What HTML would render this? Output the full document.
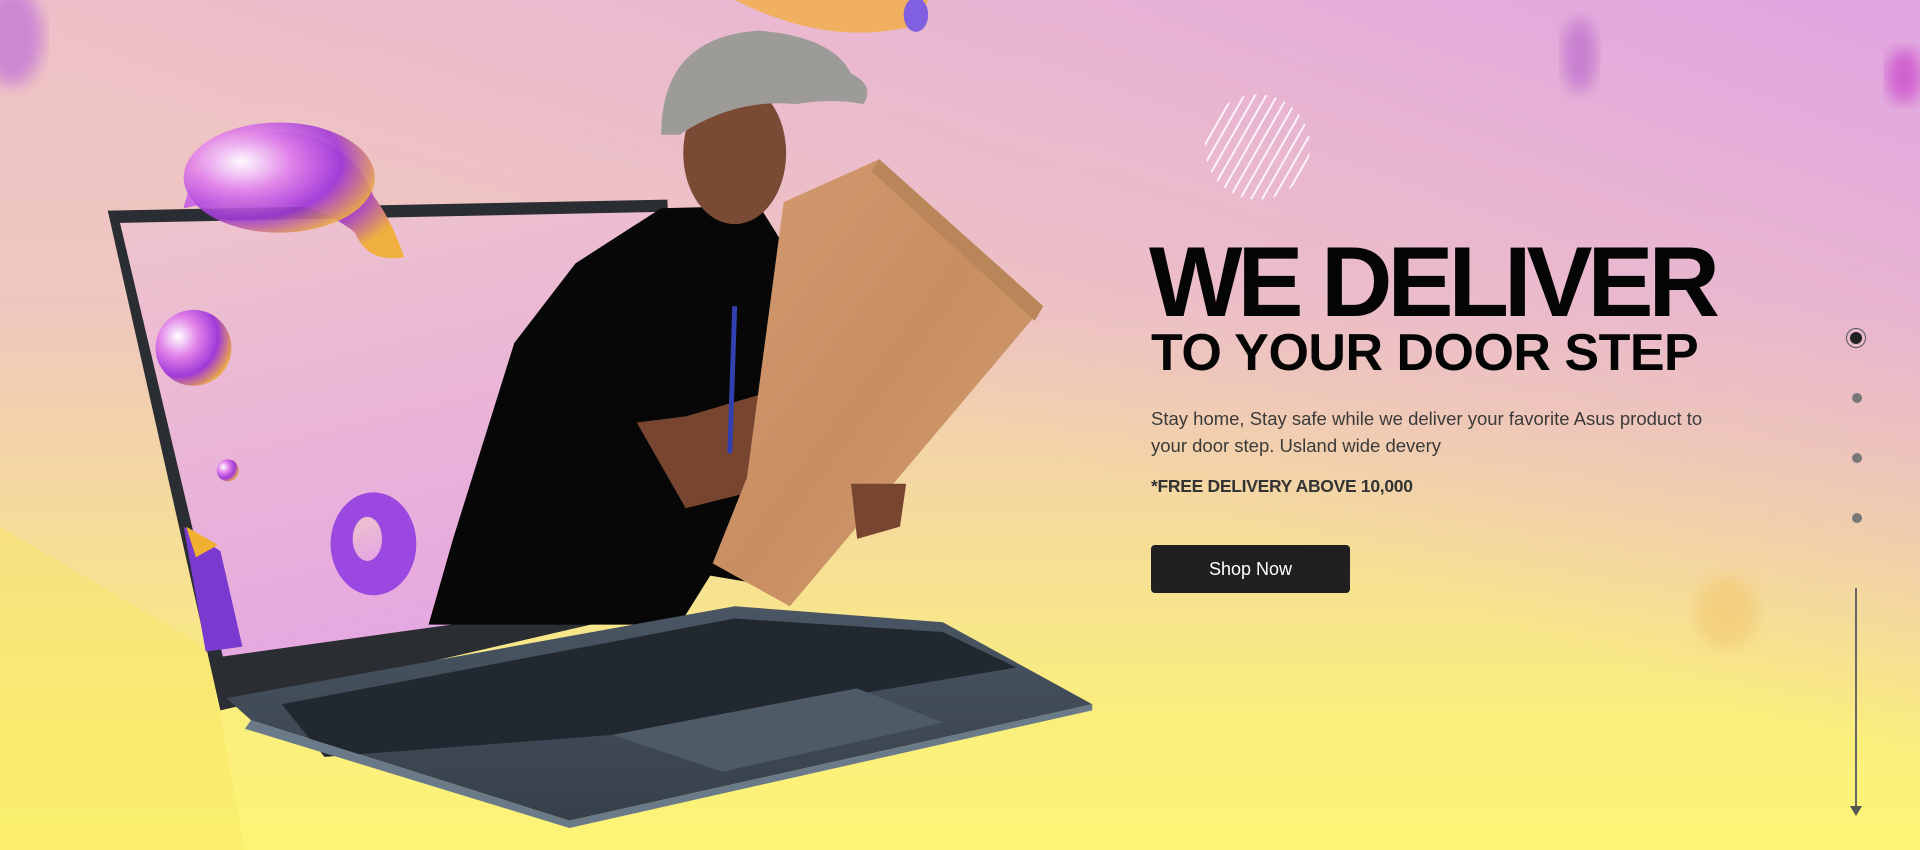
<!DOCTYPE html>
<html><head><meta charset="utf-8"><style>
html,body{margin:0;padding:0}
body{width:1920px;height:850px;position:relative;overflow:hidden;font-family:"Liberation Sans",sans-serif;
background:linear-gradient(180deg,#eec3c6 0%,#efc6c0 35%,#f5dc9a 62%,#fbef7c 85%,#fdf476 100%);}
.ov{position:absolute;inset:0;background:linear-gradient(200deg,rgba(222,160,228,0.9) 0%,rgba(228,170,220,0.5) 25%,rgba(230,180,210,0) 50%);}
svg.art{position:absolute;left:0;top:0;width:1920px;height:850px}
.h1{position:absolute;left:1149px;top:227px;font-size:99px;font-weight:bold;color:#050505;letter-spacing:-5px;line-height:110px;white-space:nowrap}
.h2{position:absolute;left:1151px;top:323px;font-size:52px;font-weight:bold;color:#050505;letter-spacing:-0.5px;line-height:60px;white-space:nowrap}
.p{position:absolute;left:1151px;top:405px;width:585px;font-size:18.5px;line-height:27px;color:#3a3a3a}
.fd{position:absolute;left:1151px;top:476px;font-size:17.5px;font-weight:bold;color:#333;letter-spacing:-0.3px}
.btn{position:absolute;left:1151px;top:545px;width:199px;height:48px;background:#202020;border-radius:4px;color:#fff;font-size:18px;text-align:center;line-height:48px}
.dot{position:absolute;width:10px;height:10px;border-radius:50%;background:#777;left:1852px}
.act{position:absolute;left:1846px;top:328px;width:20px;height:20px;border-radius:50%;border:1px solid #555;box-sizing:border-box}
.act:after{content:"";position:absolute;left:3px;top:3px;width:12px;height:12px;border-radius:50%;background:#222}
.line{position:absolute;left:1855px;top:588px;width:2px;height:218px;background:#666}
.arr{position:absolute;left:1850px;top:806px;border-left:6px solid transparent;border-right:6px solid transparent;border-top:10px solid #555}
</style></head><body>
<div class="ov"></div>
<svg class="art" viewBox="0 0 1568 694" preserveAspectRatio="none">
<defs>
<radialGradient id="sp" cx="0.3" cy="0.35" r="0.75"><stop offset="0" stop-color="#fff"/><stop offset="0.35" stop-color="#e080e8"/><stop offset="0.7" stop-color="#a03ad8"/><stop offset="1" stop-color="#f0b040"/></radialGradient>
<linearGradient id="scr" x1="0" y1="0" x2="0.3" y2="1"><stop offset="0" stop-color="#eec4cc"/><stop offset="1" stop-color="#e6a8e0"/></linearGradient>
<linearGradient id="box" x1="0" y1="0" x2="1" y2="1"><stop offset="0" stop-color="#d49a70"/><stop offset="0.5" stop-color="#c98e62"/><stop offset="1" stop-color="#d0a070"/></linearGradient>
<linearGradient id="deck" x1="0" y1="0" x2="0" y2="1"><stop offset="0" stop-color="#4a5663"/><stop offset="1" stop-color="#36404b"/></linearGradient>
<clipPath id="hc"><circle cx="1027" cy="120" r="43"/></clipPath>
<filter id="bl"><feGaussianBlur stdDeviation="6"/></filter>
</defs>
<polygon points="0,430 170,530 200,694 0,694" fill="#f7e660" opacity="0.4"/>
<ellipse cx="1290" cy="45" rx="14" ry="30" fill="#c880d0" filter="url(#bl)"/>
<ellipse cx="1555" cy="62" rx="14" ry="22" fill="#d060d0" filter="url(#bl)"/>
<ellipse cx="10" cy="30" rx="25" ry="40" fill="#c070d8" filter="url(#bl)" opacity="0.7"/>
<ellipse cx="1410" cy="500" rx="25" ry="30" fill="#f2c870" filter="url(#bl)" opacity="0.6"/>
<g clip-path="url(#hc)" stroke="#fff" stroke-width="1.6" opacity="0.85">
<path d="M934,190 L1014,50 M943,190 L1023,50 M952,190 L1032,50 M961,190 L1041,50 M970,190 L1050,50 M979,190 L1059,50 M988,190 L1068,50 M997,190 L1077,50 M1006,190 L1086,50 M1015,190 L1095,50 M1024,190 L1104,50 M1033,190 L1113,50"/>
</g>
<path d="M600,0 Q680,40 750,20 L758,0 Z" fill="#f0b060"/>
<ellipse cx="748" cy="12" rx="10" ry="14" fill="#8060e0"/>
<polygon points="88,172 545,163 560,492 180,580" fill="#2a2d31"/>
<polygon points="98,182 540,173 555,484 182,536" fill="url(#scr)"/>
<polygon points="150,430 180,450 198,528 168,532" fill="#7a3ad0"/>
<polygon points="152,430 178,445 160,455" fill="#f0b030"/>
<circle cx="158" cy="284" r="31" fill="url(#sp)"/>
<circle cx="186" cy="384" r="9" fill="url(#sp)"/>
<ellipse cx="305" cy="444" rx="35" ry="42" fill="#9a48e0"/>
<ellipse cx="300" cy="440" rx="12" ry="18" fill="url(#scr)"/>
<path d="M150,170 A80,75 0 0 1 305,160 Q320,180 330,210 Q300,215 290,190 Q240,150 150,170Z" fill="url(#sp)"/>
<ellipse cx="228" cy="145" rx="78" ry="45" fill="url(#sp)" opacity="0.9"/>
<polygon points="350,510 370,440 420,280 470,215 540,170 620,168 640,200 640,480 580,470 555,510" fill="#070707"/>
<ellipse cx="600" cy="125" rx="42" ry="58" fill="#7a4a35"/>
<path d="M540,110 Q540,30 620,25 Q680,30 695,60 Q715,70 705,85 Q680,80 650,85 Q600,80 555,110Z" fill="#9c9b97"/>
<polygon points="520,345 560,340 730,290 760,260 820,235 830,260 780,310 740,330 700,345 620,400 560,415" fill="#774530"/>
<polygon points="640,165 718,130 852,250 645,495 582,460 610,390" fill="url(#box)"/>
<polygon points="718,130 852,250 845,262 712,140" fill="#b9865a"/>
<polygon points="695,395 740,395 735,430 700,440" fill="#774530"/>
<path d="M600,250 L596,370" stroke="#3040b0" stroke-width="4"/>
<polygon points="185,570 600,495 770,508 892,575 465,670 205,588" fill="url(#deck)"/>
<polygon points="230,575 600,505 770,516 830,545 500,600 265,618" fill="#22282f"/>
<polygon points="500,600 700,562 770,590 590,630" fill="#4e5a66"/>
<polygon points="205,588 465,670 892,575 892,580 465,676 200,595" fill="#6a7a88"/>
</svg>
<div class="h1">WE DELIVER</div>
<div class="h2">TO YOUR DOOR STEP</div>
<div class="p">Stay home, Stay safe while we deliver your favorite Asus product to your door step. Usland wide devery</div>
<div class="fd">*FREE DELIVERY ABOVE 10,000</div>
<div class="btn">Shop Now</div>
<div class="act"></div>
<div class="dot" style="top:393px"></div>
<div class="dot" style="top:453px"></div>
<div class="dot" style="top:513px"></div>
<div class="line"></div><div class="arr"></div>
</body></html>
